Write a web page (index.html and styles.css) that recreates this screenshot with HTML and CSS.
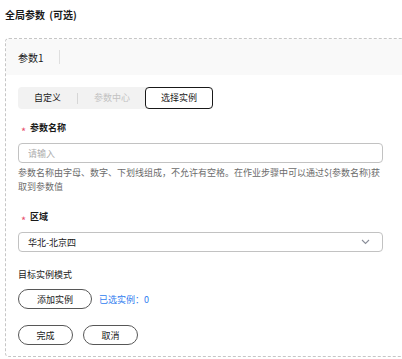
FILE: index.html
```html
<!DOCTYPE html>
<html lang="en">

<head>
    <meta charset="UTF-8">
    <meta name="viewport" content="width=device-width, initial-scale=1.0">
    <title>全局参数</title>
    <link rel="stylesheet" href="styles.css">
</head>

<body>

    <!-- Section title -->
    <h3 class="page-title">全局参数 (可选)</h3>

    <!-- Parameter card -->
    <div class="param-card">

        <!-- Card header -->
        <div class="card-header">
            <span class="card-name">参数1</span>
            <span class="header-divider"></span>
        </div>

        <div class="card-body">

            <!-- Source tabs -->
            <div class="segment">
                <span class="segment-item">自定义</span>
                <span class="segment-divider"></span>
                <span class="segment-item disabled">参数中心</span>
                <span class="segment-item active">选择实例</span>
            </div>

            <!-- Parameter name -->
            <div class="field">
                <label class="field-label required">参数名称</label>
                <input class="text-input" type="text" placeholder="请输入">
                <p class="field-help">参数名称由字母、数字、下划线组成，不允许有空格。在作业步骤中可以通过${参数名称}获取到参数值</p>
            </div>

            <!-- Region -->
            <div class="field">
                <label class="field-label required">区域</label>
                <div class="select-box">
                    <span>华北-北京四</span>
                    <svg class="chevron" width="9" height="6" viewBox="0 0 9 6">
                        <path d="M1 1 L4.5 4.5 L8 1" fill="none" stroke="#8a8e99" stroke-width="1.1" />
                    </svg>
                </div>
            </div>

            <!-- Target instances -->
            <div class="field">
                <label class="field-label">目标实例模式</label>
                <div class="instance-row">
                    <button class="pill-btn wide">添加实例</button>
                    <span class="selected-count">已选实例：0</span>
                </div>
            </div>

            <!-- Actions -->
            <div class="actions">
                <button class="pill-btn">完成</button>
                <button class="pill-btn">取消</button>
            </div>

        </div>
    </div>

</body>

</html>
```

FILE: styles.css
```css
/* Page base */
body {
    margin: 0;
    padding: 8px 0 0 5px;
    font-family: "Noto Sans CJK SC", "Noto Sans", sans-serif;
    font-size: 9px;
    color: #191919;
    background-color: white;
    overflow: hidden;
}

/* Title */
.page-title {
    margin: 0;
    font-size: 10px;
    line-height: 14px;
    font-weight: bold;
    word-spacing: 2px;
}

/* Card with dashed border */
.param-card {
    margin-top: 16px;
    width: 420px;
    border: 1px dashed #c6c6c6;
    border-radius: 4px;
}

.card-header {
    height: 36px;
    background-color: #f9f9f9;
    display: flex;
    align-items: center;
    padding-left: 12px;
    border-radius: 4px 4px 0 0;
}

.card-name {
    font-size: 10px;
}

.header-divider {
    width: 1px;
    height: 14px;
    background-color: #dfdfdf;
    margin-left: 15px;
}

.card-body {
    padding: 12px 12px 11px 12px;
}

/* Segmented tabs */
.segment {
    display: inline-flex;
    align-items: center;
    height: 22px;
    background-color: #f2f2f2;
    border-radius: 4px;
}

.segment-item {
    padding: 0 16px;
    line-height: 20px;
}

.segment-item.disabled {
    color: #c2c2c2;
    padding: 0 15px 0 16px;
}

.segment-item.active {
    padding: 0 15px;
    background-color: white;
    border: 1px solid #191919;
    border-radius: 4px;
}

.segment-divider {
    width: 1px;
    height: 11px;
    background-color: #d6d6d6;
}

/* Form fields */
.field {
    margin-top: 12px;
}

.field + .field {
    margin-top: 16px;
}

.field-label {
    display: block;
    line-height: 14px;
    margin-bottom: 8px;
}

.field-label.required {
    font-weight: bold;
}

.field-label.required::before {
    content: "*";
    color: #e8506e;
    font-weight: normal;
    font-size: 11px;
    line-height: 14px;
    display: inline-block;
    width: 12px;
    padding-left: 3px;
    box-sizing: border-box;
    vertical-align: top;
    transform: translateY(3px);
}

.text-input {
    display: block;
    box-sizing: border-box;
    width: 365px;
    height: 20px;
    border: 1px solid #c2c2c2;
    border-radius: 4px;
    padding: 0 9px;
    font-family: inherit;
    font-size: 9px;
    outline: none;
}

.text-input::placeholder {
    color: #adadad;
}

.field-help {
    margin: 3px 0 0 0;
    width: 365px;
    color: #6b6b6b;
    line-height: 14px;
}

.select-box {
    box-sizing: border-box;
    width: 365px;
    height: 20px;
    border: 1px solid #c2c2c2;
    border-radius: 4px;
    padding: 0 12px 0 9px;
    display: flex;
    align-items: center;
    justify-content: space-between;
}

/* Instance selection */
.instance-row {
    display: flex;
    align-items: center;
    gap: 7px;
    margin-top: -1px;
}

.selected-count {
    color: #2f7df0;
}

/* Rounded buttons */
.pill-btn {
    box-sizing: border-box;
    width: 55px;
    height: 20px;
    border: 1px solid #575757;
    border-radius: 10px;
    background-color: white;
    font-family: inherit;
    font-size: 9px;
    color: #191919;
    padding: 0;
}

.pill-btn.wide {
    width: 74px;
}

.actions {
    display: flex;
    gap: 10px;
    margin-top: 16px;
}
```
